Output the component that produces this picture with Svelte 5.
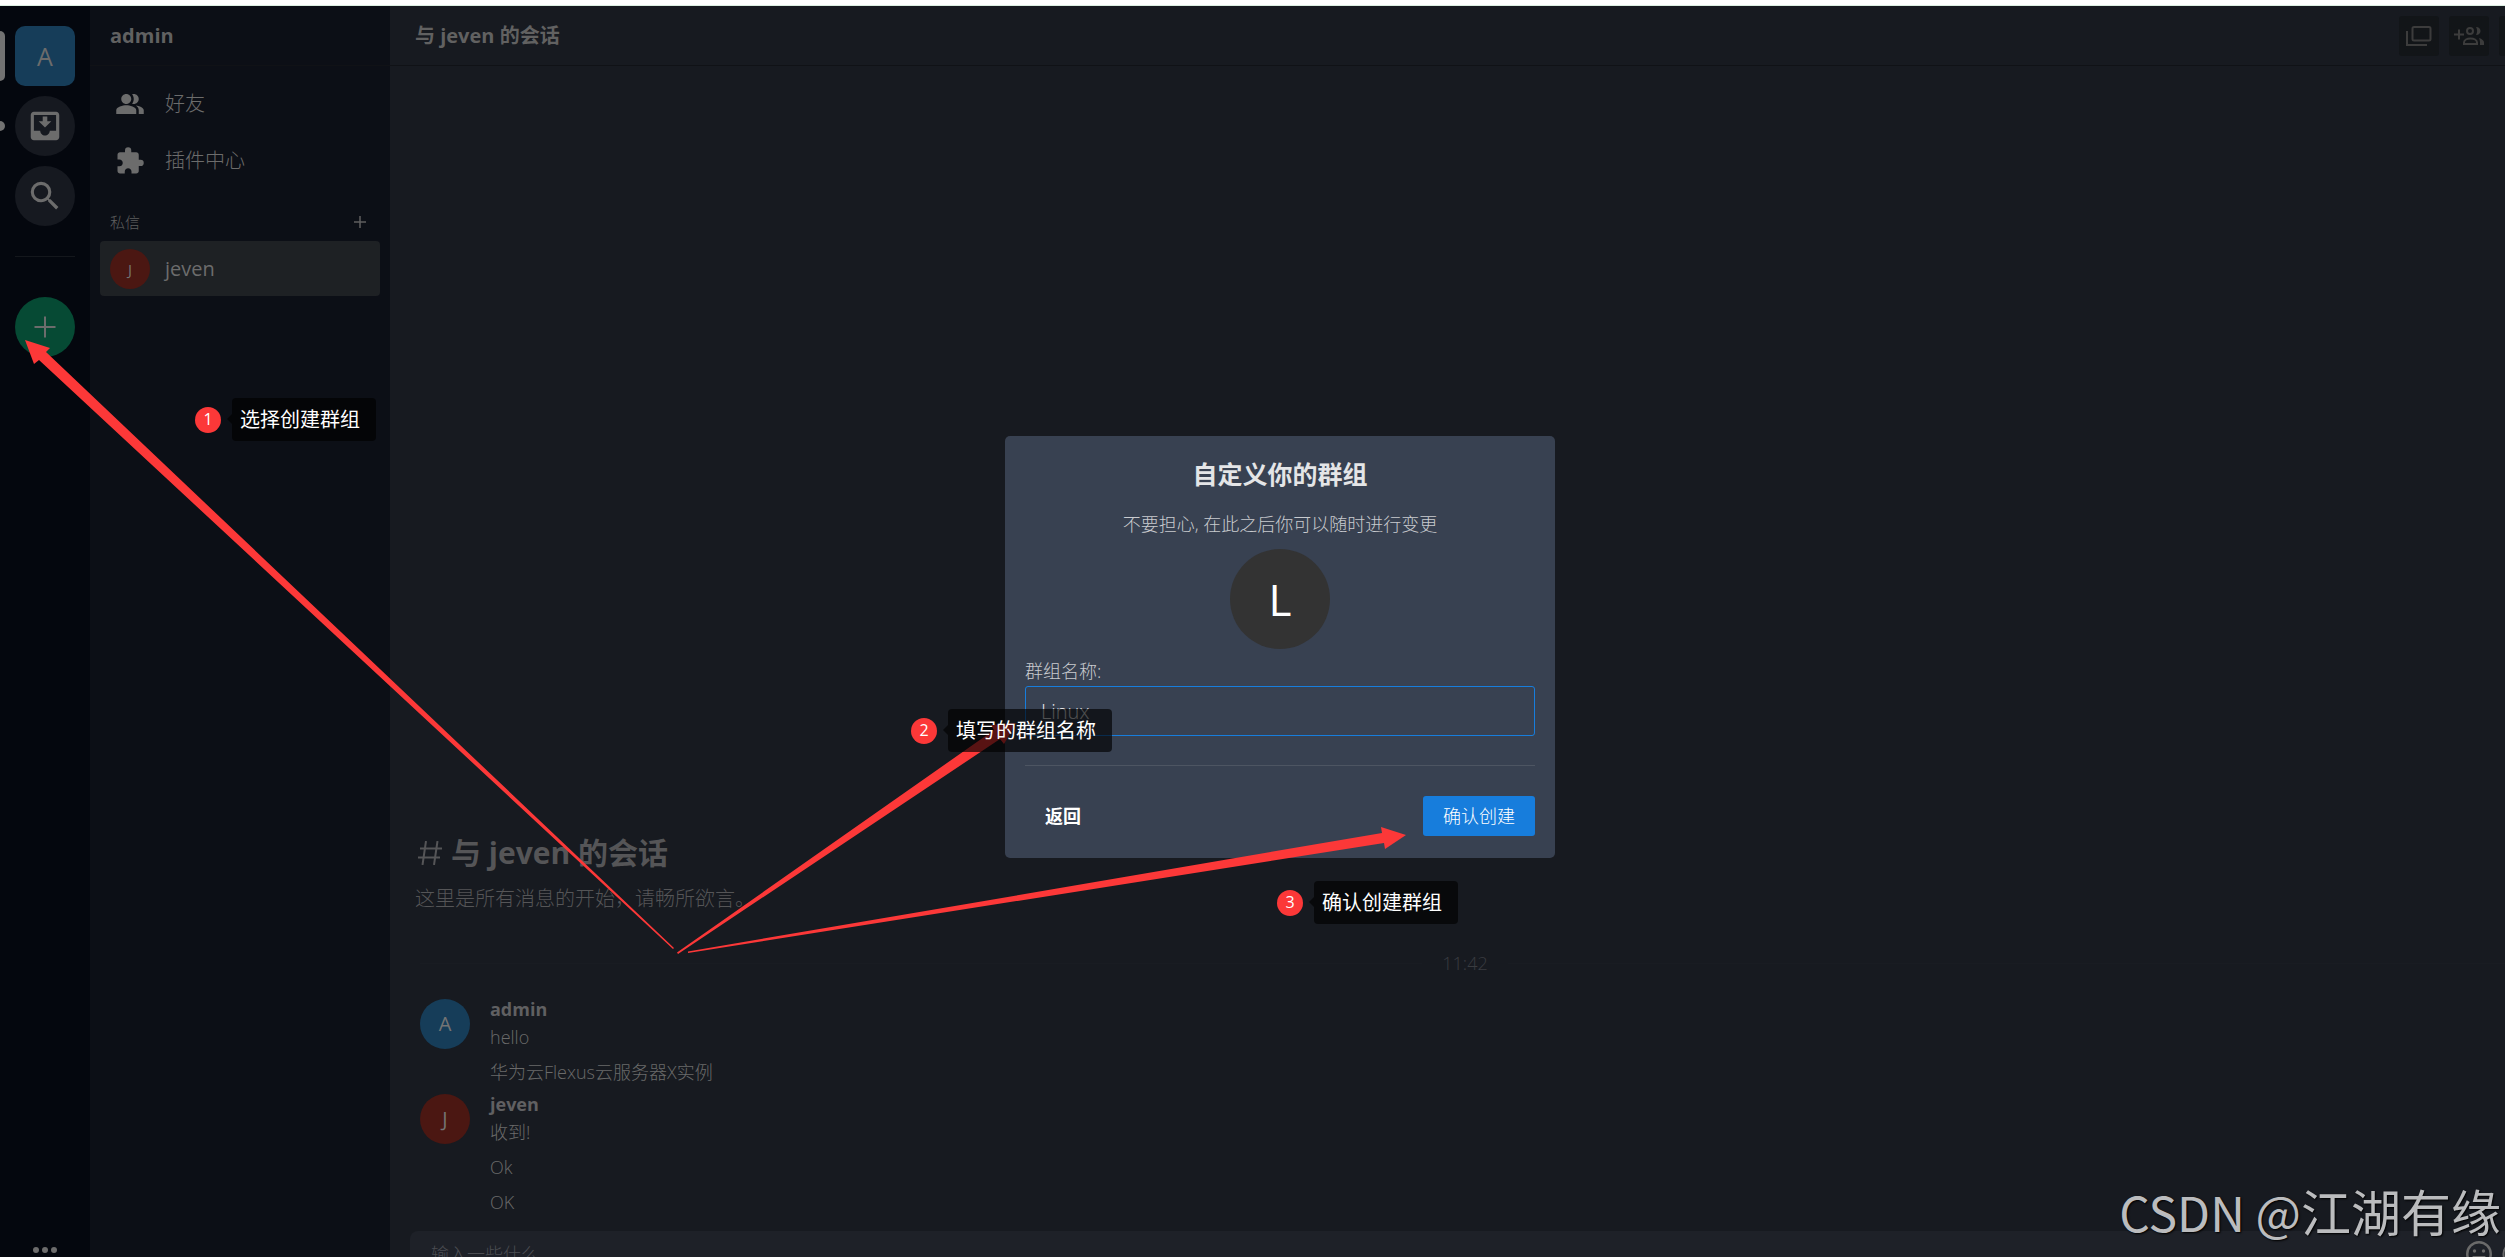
<script>
  const groups = [
    { name: 'admin', initial: 'A', tone: 'blue', lines: ['hello', '华为云Flexus云服务器X实例'] },
    { name: 'jeven', initial: 'J', tone: 'red', lines: ['收到!', 'Ok', 'OK'] }
  ];
  const steps = [
    { n: 1, text: '选择创建群组', x: 195, y: 398 },
    { n: 2, text: '填写的群组名称', x: 911, y: 709 },
    { n: 3, text: '确认创建群组', x: 1277, y: 881 }
  ];
  let groupName = $state('Linux');
</script>

<div class="page">
  <div class="app">
    <nav class="rail">
      <div class="slot active"><button class="tile me" aria-label="admin">A</button></div>
      <div class="slot unread">
        <button class="tile" aria-label="收件箱">
          <svg viewBox="0 0 24 24" width="38" height="38"><path d="M16 9h-2.55V6h-2.9v3H8l4 4zm3-6H4.99C3.88 3 3 3.9 3 5v14c0 1.1.88 2 1.99 2H19c1.1 0 2-.9 2-2V5c0-1.1-.9-2-2-2zm0 12h-4c0 1.66-1.35 3-3 3s-3-1.34-3-3H4.99V5H19v10z" /></svg>
        </button>
      </div>
      <div class="slot">
        <button class="tile" aria-label="搜索">
          <svg viewBox="0 0 24 24" width="38" height="38"><path d="M15.5 14h-.79l-.28-.27A6.471 6.471 0 0 0 16 9.5 6.5 6.5 0 1 0 9.500 16c1.610 0 3.090-.59 4.230-1.570l.27.28v.79l5 4.990L20.490 19l-4.990-5zm-6 0C7.010 14 5 11.990 5 9.500S7.010 5 9.500 5 14 7.010 14 9.500 11.990 14 9.500 14z" /></svg>
        </button>
      </div>
      <hr />
      <div class="slot">
        <button class="tile add" aria-label="创建群组">
          <svg viewBox="0 0 24 24" width="38" height="38"><path d="M22.500 13h-9.500v9.500h-2V13H1.500v-2H11V1.500h2V11h9.500z" /></svg>
        </button>
      </div>
      <button class="more" aria-label="更多"><i></i><i></i><i></i></button>
    </nav>

    <aside class="side">
      <header class="bar">admin</header>
      <div class="links">
        <a href="#friends" class="item">
          <svg viewBox="0 0 24 24" width="30" height="30"><path d="M16.670 13.130C18.040 14.060 19 15.320 19 17v3h4v-3c0-2.180-3.570-3.470-6.330-3.870zM15 12c2.210 0 4-1.790 4-4s-1.790-4-4-4c-.47 0-.91.100-1.330.240C14.500 5.270 15 6.580 15 8s-.5 2.730-1.330 3.760c.42.140.86.240 1.330.240zM9 12c2.210 0 4-1.790 4-4s-1.790-4-4-4-4 1.790-4 4 1.790 4 4 4zm0 1c-2.670 0-8 1.340-8 4v3h16v-3c0-2.660-5.330-4-8-4z" /></svg>
          <span>好友</span>
        </a>
        <a href="#plugins" class="item">
          <svg viewBox="0 0 24 24" width="30" height="30"><path d="M20.500 11H19V7c0-1.100-.9-2-2-2h-4V3.500a2.500 2.500 0 0 0-5 0V5H4c-1.100 0-1.990.9-1.990 2v3.800H3.500c1.490 0 2.700 1.210 2.700 2.700s-1.210 2.700-2.700 2.700H2V20c0 1.100.9 2 2 2h3.800v-1.500c0-1.490 1.210-2.700 2.700-2.700s2.700 1.210 2.700 2.700V22H17c1.100 0 2-.9 2-2v-4h1.500a2.500 2.500 0 0 0 0-5z" /></svg>
          <span>插件中心</span>
        </a>
        <div class="section">
          <span>私信</span>
          <button aria-label="新建私信"><svg viewBox="0 0 12 12" width="12" height="12"><path d="M5.250 0h1.500v5.250H12v1.500H6.750V12h-1.500V6.750H0v-1.500h5.250z" /></svg></button>
        </div>
        <a href="#jeven" class="item selected"><span class="avatar small red">J</span><span>jeven</span></a>
      </div>
    </aside>

    <main class="chat">
      <header class="bar">
        <h1>与 jeven 的会话</h1>
        <div class="tools">
          <button aria-label="在新窗口打开">
            <svg viewBox="0 0 26 20" width="26" height="20" class="line"><rect x="6.500" y="1" width="18" height="13.500" rx="1.500" /><path d="M1 5v14h20" /></svg>
          </button>
          <button aria-label="邀请成员">
            <svg viewBox="0 0 30 18" width="30" height="18" class="line"><path d="M0 7.500h10M5 2.500v10" /><circle cx="16" cy="4" r="3" /><path d="M10 17v-1.500c0-2.500 3-4 6.500-4s6.500 1.500 6.500 4V17z" /><path class="solid" d="M22 0c6 0 6 8 0 8 1.500-2.500 1.500-5.500 0-8zM25 11c3 1 5 2.500 5 4.500V18h-4v-2.500c0-1.700-.3-3-1-4.500z" /></svg>
          </button>
          <button aria-label="成员"></button>
        </div>
      </header>
      <div class="messages">
        <div class="intro">
          <h2>
            <svg viewBox="0 0 24 24" width="24" height="24" class="line"><path d="M8 0 4.500 24M19.500 0 16 24M2 7.500h22M0 16.500h22" /></svg>
            与 jeven 的会话
          </h2>
          <p>这里是所有消息的开始，请畅所欲言。</p>
        </div>
        <div class="time"><span>11:42</span></div>
        {#each groups as g}
          <section class="group">
            <span class="avatar {g.tone}">{g.initial}</span>
            <div>
              <strong>{g.name}</strong>
              {#each g.lines as line}<p>{line}</p>{/each}
            </div>
          </section>
        {/each}
      </div>
      <div class="composer">
        <input aria-label="消息" placeholder="输入一些什么..." />
        <button aria-label="表情">
          <svg viewBox="0 0 26 26" width="26" height="26"><path d="M13 0a13 13 0 1 0 0 26 13 13 0 0 0 0-26zm0 2.500a10.500 10.500 0 1 1 0 21 10.500 10.500 0 0 1 0-21z" /><circle cx="8.500" cy="10" r="1.700" /><circle cx="17.500" cy="10" r="1.700" /><path d="M6.500 15h13c-1 7-12 7-13 0z" /></svg>
        </button>
        <button aria-label="添加">
          <svg viewBox="0 0 26 26" width="26" height="26" class="line"><circle cx="13" cy="13" r="11.500" /><path d="M13 7v12M7 13h12" /></svg>
        </button>
      </div>
    </main>

    <div class="mask">
      <form class="modal" onsubmit={(e) => e.preventDefault()}>
        <h2>自定义你的群组</h2>
        <p>不要担心, 在此之后你可以随时进行变更</p>
        <span class="avatar big">{groupName.slice(0, 1)}</span>
        <label for="group-name">群组名称:</label>
        <input id="group-name" bind:value={groupName} />
        <hr />
        <div class="actions">
          <button type="button" class="back">返回</button>
          <button type="submit" class="ok">确认创建</button>
        </div>
      </form>
    </div>
  </div>

  <svg class="arrows" width="1420" height="960" viewBox="0 0 1420 960">
    <path d="M25 340 50 348 46 352 674 948 673 949 39 360 34 364z" />
    <path d="M1016 723 1004 744 1000 739 678 954 677 952.500 994 730 991 725z" />
    <path d="M1406 835 1385 849 1384 843 688 953 688 951.500 1382 833 1381 827z" />
  </svg>
  {#each steps as s}
    <div class="step" style:left="{s.x}px" style:top="{s.y}px"><b>{s.n}</b><span>{s.text}</span></div>
  {/each}
  <div class="mark">CSDN @<span>江湖有缘</span></div>
</div>

<style>
  :global(body) { background: #fff; }
  .page {
    position: relative; height: 100vh; overflow: hidden; box-sizing: border-box; padding-top: 5px;
    font: 300 18px/28px "Open Sans", "Noto Sans CJK SC", sans-serif; color: #6a6a6a;
  }
  .app {
    position: relative; display: grid; grid-template-columns: 90px 300px 1fr;
    width: calc(100% + 55px); height: calc(100vh + 25px); border-top: 1px solid #dcefe2; background: #171a20;
  }
  h1, h2, p { margin: 0; font-size: inherit; }
  button { border: 0; padding: 0; background: none; color: inherit; font: inherit; cursor: pointer; }
  a { color: inherit; text-decoration: none; }
  svg { display: block; fill: currentColor; }
  .line { fill: none; stroke: currentColor; stroke-width: 2; }
  .line .solid { fill: currentColor; stroke: none; }

  .rail { display: flex; flex-direction: column; gap: 10px; padding: 20px 0 35px; background: #04070e; }
  .slot { display: flex; align-items: center; gap: 10px; }
  .slot::before { content: ""; width: 5px; height: 0; border-radius: 0 5px 5px 0; background: #727272; }
  .active::before { height: 50px; }
  .unread::before { height: 10px; }
  .tile { display: grid; place-items: center; width: 60px; height: 60px; border-radius: 50%; background: #161920; color: #6c6c6c; font-size: 25px; font-weight: 400; }
  .me { border-radius: 10px; background: #163d59; }
  .add { background: #064a34; }
  .add svg { width: 24px; height: 24px; }
  .rail hr { width: 60px; margin: 20px 15px 30px; border: 0; border-top: 1px solid #14171c; }
  .more { display: flex; justify-content: center; gap: 3px; margin-top: auto; }
  .more i { width: 6px; height: 6px; border-radius: 50%; background: #6c6c6c; }

  .bar { display: flex; align-items: center; height: 59px; box-sizing: content-box; border-bottom: 1px solid #101216; font-size: 20px; font-weight: 700; color: #616161; }
  .side { background: #0c0f16; }
  .side .bar { padding: 0 20px; }
  .links { display: flex; flex-direction: column; gap: 2px; padding: 10px; font-size: 20px; }
  .item { display: flex; align-items: center; gap: 15px; height: 55px; padding: 0 10px; border-radius: 4px; color: #6c6c6c; }
  .item svg { margin: 0 5px; }
  .item.selected { background: #1e2124; font-weight: 400; }
  .section { display: flex; align-items: center; justify-content: space-between; height: 35px; padding: 14px 14px 0 10px; font-size: 15px; color: #5f5f5f; }

  .avatar { display: grid; place-items: center; flex: none; width: 50px; height: 50px; border-radius: 50%; color: #747474; font-size: 20px; font-weight: 400; }
  .small { width: 40px; height: 40px; font-size: 15px; }
  .blue { background: #163d59; }
  .red { background: #4b1712; }

  .chat { display: flex; flex-direction: column; min-width: 0; min-height: 0; }
  .chat .bar { justify-content: space-between; padding: 0 21px 0 25px; }
  .tools { display: flex; gap: 10px; }
  .tools button { display: grid; place-items: center; width: 40px; height: 40px; border-radius: 3px; background: #121518; color: #3c3c3c; }
  .messages { flex: 1; display: flex; flex-direction: column; justify-content: flex-end; padding: 0 50px 9px 25px; }
  .intro { font-size: 20px; line-height: 32px; color: #555557; }
  .intro h2 { display: flex; align-items: center; gap: 9px; padding-left: 3px; font-size: 30px; line-height: 60px; }
  .time { display: flex; align-items: center; gap: 20px; margin: 34px 0 20px 5px; color: #3a3c40; }
  .time::before, .time::after { content: ""; flex: 1; border-top: 1px solid #191c22; }
  .group { display: flex; gap: 20px; padding: 0 0 2px 5px; }
  .group .avatar { margin-top: 2px; }
  .group strong { display: block; line-height: 24px; font-weight: 700; color: #606062; }
  .group p { line-height: 35px; }
  .group p:first-of-type { line-height: 32px; margin-bottom: 2px; }
  .composer { display: flex; align-items: center; gap: 10px; height: 46px; margin: 0 20px 11px; padding: 0 12px 0 21px; border-radius: 8px; background: #1e2128; }
  .composer input { flex: 1; padding: 0; border: 0; outline: 0; background: none; font: inherit; color: inherit; }
  .composer input::placeholder { color: #4b4d52; }

  .mask { position: absolute; inset: 0; display: grid; place-items: center; }
  .modal { display: flex; flex-direction: column; box-sizing: border-box; width: 550px; padding: 20px 20px 22px; border-radius: 5px; background: #384151; color: #c9cbcf; }
  .modal h2 { text-align: center; font-size: 25px; line-height: 36px; color: #e4e5e7; }
  .modal p { margin: 18px 0 11px; text-align: center; }
  .big { align-self: center; width: 100px; height: 100px; margin-bottom: 8px; background: #333; color: #fff; font-size: 44px; }
  .modal input { box-sizing: border-box; height: 50px; margin-top: 1px; padding: 0 15px; border: 1px solid #177ddc; border-radius: 3px; outline: 0; background: none; color: #e6e7ea; font: inherit; font-size: 20px; }
  .modal hr { width: 100%; margin: 29px 0 30px; border: 0; border-top: 1px solid #4d5562; }
  .actions { display: flex; justify-content: space-between; }
  .actions button { height: 40px; padding: 0 20px; border-radius: 3px; color: #fff; }
  .actions .back { font-weight: 700; }
  .actions .ok { background: #177ddc; }

  .arrows { position: absolute; left: 0; top: 0; fill: #fc3838; }
  .step { position: absolute; display: flex; align-items: center; gap: 11px; color: #fff; font-size: 20px; font-weight: 400; white-space: nowrap; }
  .step b { width: 26px; height: 26px; border-radius: 50%; background: #fc3838; text-align: center; font-size: 16px; font-weight: 400; line-height: 24px; }
  .step span { position: relative; padding: 0 16px 0 8px; border-radius: 4px; background: rgba(0, 0, 0, 0.65); line-height: 43px; }
  .step span::before { content: ""; position: absolute; right: 100%; top: 16px; border: 5px solid transparent; border-left-width: 0; border-right-color: rgba(0, 0, 0, 0.65); }
  .mark { position: absolute; right: 4px; bottom: 10px; font: 400 48px/72px "Noto Sans CJK SC", sans-serif; color: #bbbcbe; text-shadow: 1px 1px 2px #000; white-space: nowrap; }
  .mark span { font-size: 50px; }
</style>
